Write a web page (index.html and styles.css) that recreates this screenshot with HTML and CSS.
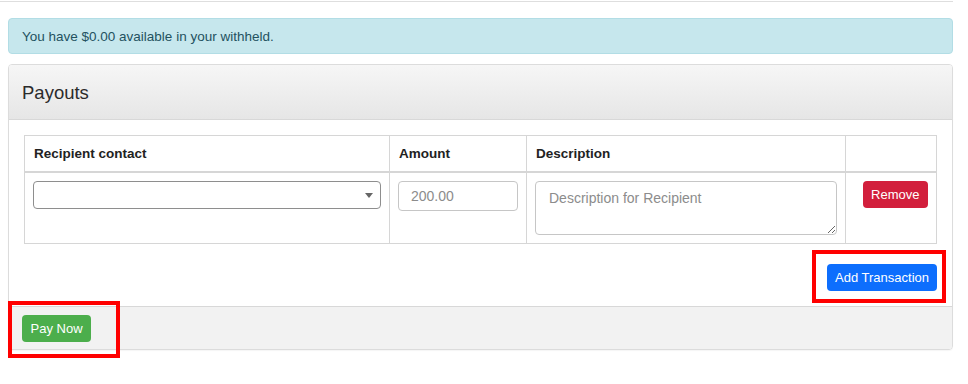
FILE: index.html
```html
<!DOCTYPE html>
<html>
<head>
<meta charset="utf-8">
<link rel="stylesheet" href="styles.css">
</head>
<body>
<div class="topline"></div>
<div class="page">
  <div class="alert">You have $0.00 available in your withheld.</div>
  <div class="panel">
    <div class="panel-heading">Payouts</div>
    <div class="panel-body">
      <table class="tx">
        <colgroup>
          <col class="c1"><col class="c2"><col class="c3"><col class="c4">
        </colgroup>
        <thead>
          <tr><th>Recipient contact</th><th>Amount</th><th>Description</th><th></th></tr>
        </thead>
        <tbody>
          <tr>
            <td><div class="select-wrap"><select class="sel"><option></option></select><span class="caret"></span></div></td>
            <td><input class="amount" type="text" placeholder="200.00"></td>
            <td><textarea class="desc" placeholder="Description for Recipient"></textarea></td>
            <td class="act"><button class="btn btn-red">Remove</button></td>
          </tr>
        </tbody>
      </table>
      <div class="add-row">
        <button class="btn btn-blue">Add Transaction</button>
      </div>
    </div>
    <div class="panel-footer">
      <button class="btn btn-green">Pay Now</button>
    </div>
  </div>
  <span class="mark mark-add"></span>
  <span class="mark mark-pay"></span>
</div>
</body>
</html>
```
FILE: styles.css
```css
* { box-sizing: border-box; }
html, body { margin: 0; padding: 0; background: #fff; }
body { font-family: "Liberation Sans", Arial, sans-serif; font-size: 13px; color: #222; }
.topline { margin-top: 1px; width: 953px; border-top: 1px solid #dedede; }
.page { width: 953px; padding: 16px 0 30px 8px; position: relative; }
.alert {
  background: #c6e7ed;
  border: 1px solid #b2dde5;
  border-radius: 4px;
  color: #23525f;
  padding: 9px 13px 7px;
  font-size: 13.5px;
  line-height: 18px;
}
.panel {
  margin-top: 10px;
  border: 1px solid #dcdcdc;
  border-radius: 4px;
  box-shadow: 0 1px 1px rgba(0,0,0,0.04);
}
.panel-heading {
  height: 55px;
  padding: 17px 13px 0;
  font-size: 18.5px;
  line-height: 22px;
  color: #2b2b2b;
  background: linear-gradient(#f6f6f6, #e6e6e6);
  border-bottom: 1px solid #d8d8d8;
  border-radius: 3px 3px 0 0;
}
.panel-body { padding: 15px 15px 15px; }
.tx { border-collapse: collapse; table-layout: fixed; width: 912px; }
.c1 { width: 365px; } .c2 { width: 137px; } .c3 { width: 319px; } .c4 { width: 91px; }
.tx th, .tx td { border: 1px solid #d6d6d6; padding: 8px; vertical-align: top; text-align: left; }
.tx th { font-weight: bold; font-size: 13.5px; line-height: 19px; padding: 8px 9px; border-bottom: 2px solid #d6d6d6; color: #222; }
.tx td.act { text-align: right; }
.select-wrap { position: relative; }
.sel {
  -webkit-appearance: none; appearance: none;
  width: 100%; height: 28px;
  border: 1px solid #8e8e8e; border-radius: 4px; background: #fff;
  font-family: inherit; font-size: 13px;
}
.caret {
  position: absolute; right: 8px; top: 12px;
  border-left: 4px solid transparent; border-right: 4px solid transparent;
  border-top: 5px solid #666;
}
.amount {
  display: block; width: 100%; height: 30px;
  border: 1px solid #c6c6c6; border-radius: 4px;
  padding: 4px 12px; font-family: inherit; font-size: 14px;
}
.desc {
  display: block; width: 100%; height: 54px;
  border: 1px solid #c6c6c6; border-radius: 4px;
  padding: 7px 13px; font-family: inherit; font-size: 14px; line-height: 18px;
}
.amount::placeholder, .desc::placeholder { color: #8c8c8c; }
.btn {
  display: inline-block; height: 27px; line-height: 27px;
  padding: 0 8.5px; border: 0; border-radius: 4px;
  font-family: inherit; font-size: 13px; color: #fff;
}
.btn-red { background: #d21f3c; }
.btn-blue { background: #0d6efd; padding: 0 8px; }
.btn-green { background: #4cae4c; }
.add-row { margin-top: 20px; text-align: right; height: 27px; }
.add-row .btn { vertical-align: top; }
.panel-footer {
  background: #f2f2f2; border-top: 1px solid #d8d8d8;
  padding: 8px 13px 7px; height: 43px;
  border-radius: 0 0 3px 3px;
}
.panel-footer .btn { vertical-align: top; }
.mark { position: absolute; border: 4px solid #ff0000; pointer-events: none; }
.mark-add { left: 812px; top: 248px; width: 134px; height: 53px; }
.mark-pay { left: 8px; top: 299px; width: 112px; height: 57px; }
```
